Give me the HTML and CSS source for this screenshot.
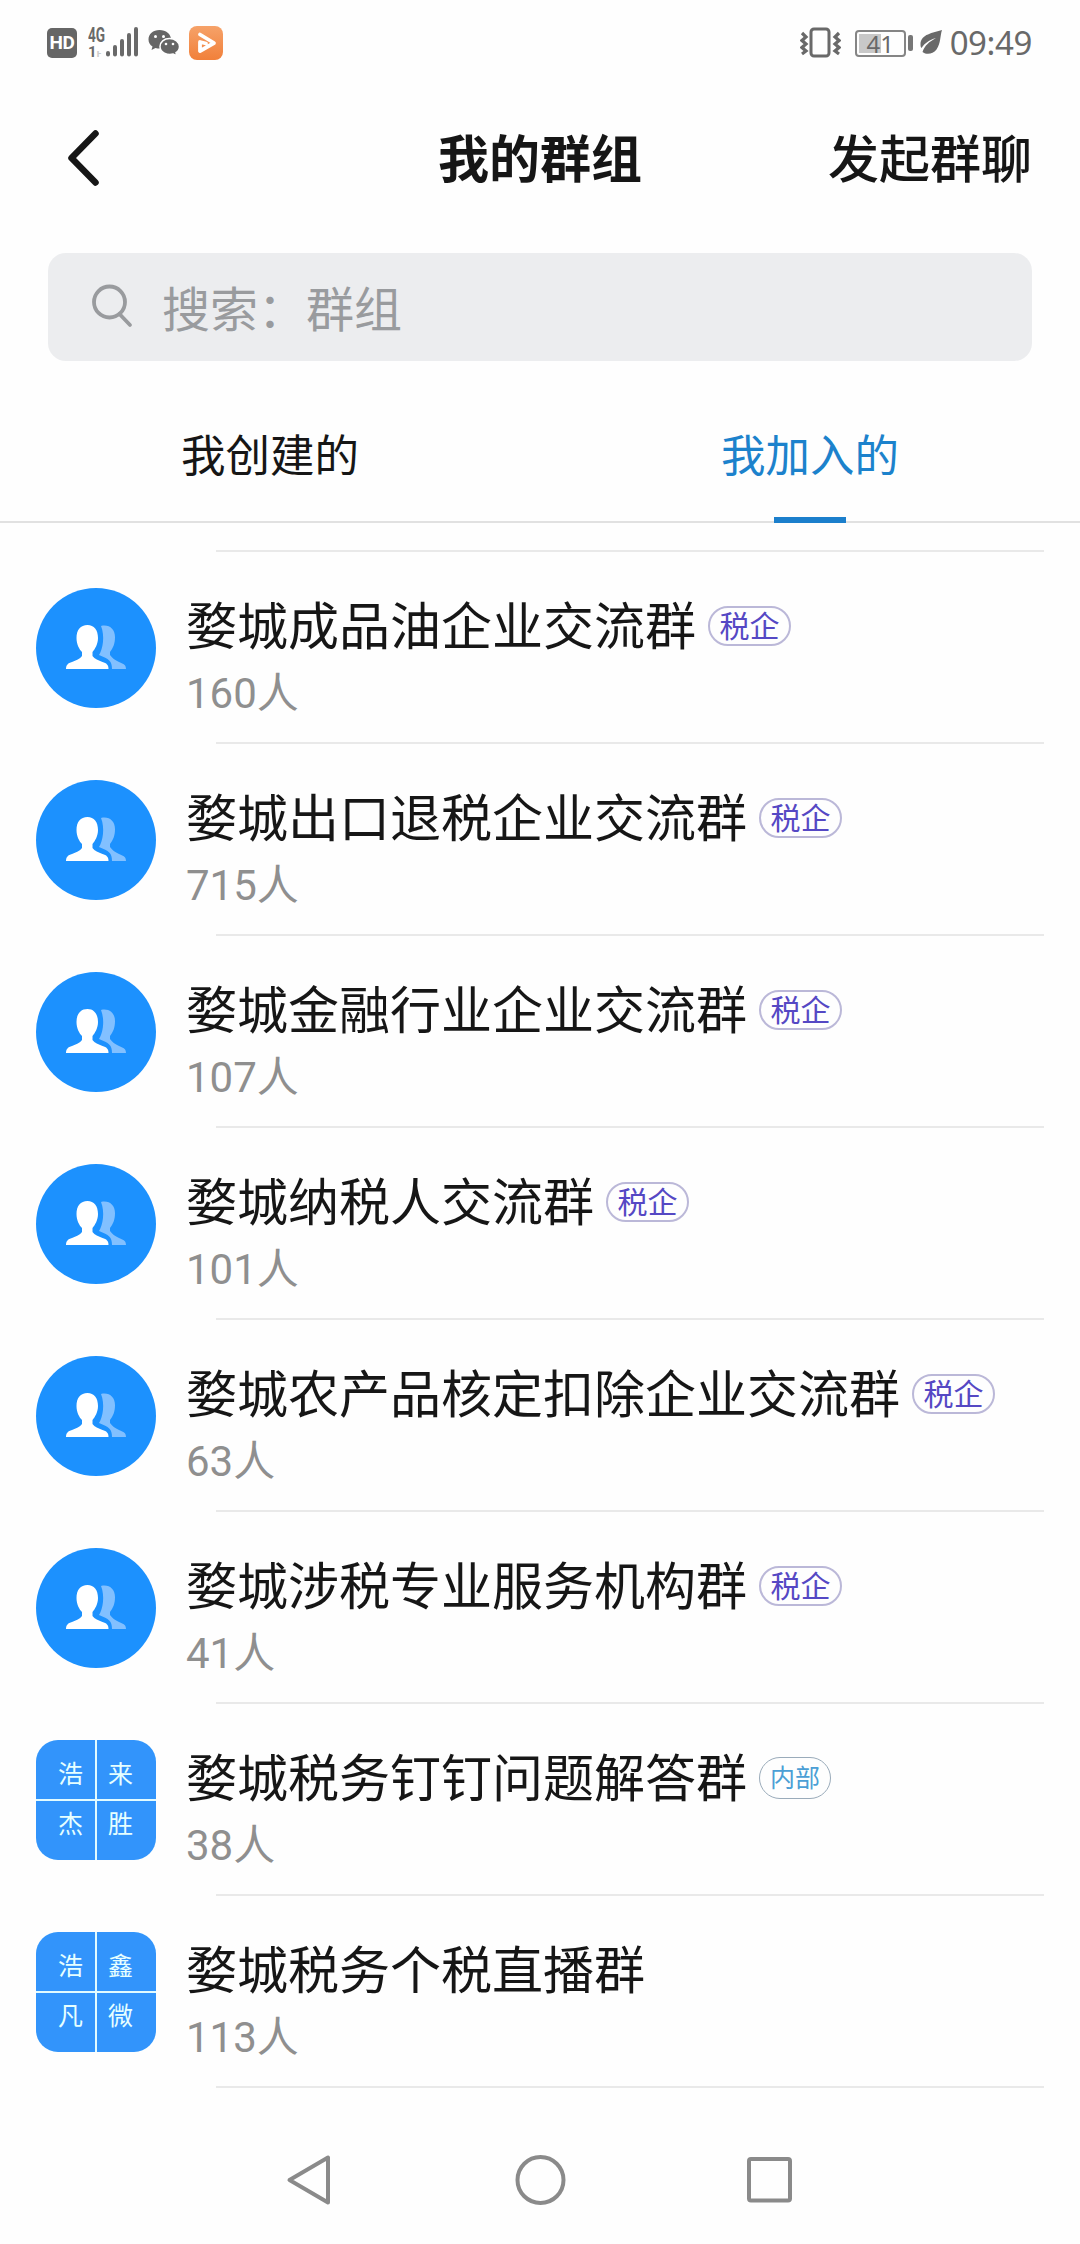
FILE: index.html
```html
<!DOCTYPE html>
<html lang="zh-CN">
<head>
<meta charset="utf-8">
<title>我的群组</title>
<link rel="stylesheet" href="styles.css">
</head>
<body>
<svg width="0" height="0" class="defs">
  <symbol id="people" viewBox="0 0 120 120">
    <path fill="#82c0ff" d="M65 38c8-2 14 3 14 11 0 7-2 11-5 15v3c2 3 5 5 9 7 5 2 7 3 7 7H76c0-8-3-10-13-14 4-6 6-19 2-29z"/>
    <path fill="#fff" d="M51.500 37c6.500 0 10.500 5 10.500 13 0 6-3 11-5.500 14v4c2 3 6 4 10 6 4 1 6 3 6 7H30c0-4 2-6 6-7 4-2 8-3 10-6v-4c-3-3-5.500-8-5.500-14 0-8 4-13 11-13z"/>
  </symbol>
</svg>
<header class="status">
  <div class="status-left">
    <span class="hd">HD</span>
    <div class="signal">
      <div class="net"><span>4G</span><span>1<i>ⱶ</i></span></div>
      <svg width="34" height="32" viewBox="0 0 34 32" stroke="#696969" stroke-width="4" stroke-linecap="round"><path d="M3 27v1.500M10 21v7.500M17 15v13.500M24 9v19.500M31 3v25.500"/></svg>
    </div>
    <svg class="wechat" width="32" height="28" viewBox="0 0 32 28">
      <path fill="#666" d="M11.500 1C5 1 .5 5 .5 10.500c0 3 1.500 5.500 4 7L3.500 21l4-2c4 1 8 .5 10.500-1 3-2 5-4 5-7.500C23 5 18 1 11.500 1z"/>
      <path fill="#666" stroke="#fff" stroke-width="1.500" d="M21.500 9.500c5.500 0 10 3.500 10 8 0 3-1.500 5-3.500 6.200l.8 3.300-3.600-2c-6 1.500-13.200-1.500-13.200-7.500 0-4.500 4-8 9.500-8z"/>
      <g fill="#fff"><circle cx="7.500" cy="7.500" r="1.500"/><circle cx="15.500" cy="7.500" r="1.500"/><circle cx="18" cy="15" r="1.300"/><circle cx="25" cy="15" r="1.300"/></g>
    </svg>
    <svg width="34" height="34" viewBox="0 0 34 34">
      <defs><linearGradient id="og" x2="0" y2="1"><stop stop-color="#f6a269"/><stop offset="1" stop-color="#f1803a"/></linearGradient></defs>
      <rect width="34" height="34" rx="8" fill="url(#og)"/>
      <path d="M11 8.500L25 17 11 25v-9l6 1.500" fill="none" stroke="#fff" stroke-width="3.800" stroke-linejoin="round" stroke-linecap="round"/>
    </svg>
  </div>
  <div class="status-right">
    <svg width="41" height="32" viewBox="0 0 41 32" fill="none" stroke="#696969">
      <rect x="11" y="2" width="18" height="27" rx="3" stroke-width="3"/>
      <path stroke-width="3.200" d="M2 6l4 4-4 3.500 4 3.500-4 3.500 4 3.500-4 3M39 6l-4 4 4 3.500-4 3.500 4 3.500-4 3.500 4 3"/>
    </svg>
    <div class="battery"><span class="cell">41</span><span class="cap"></span></div>
    <svg class="leaf" width="24" height="26" viewBox="0 0 24 26">
      <path fill="#696969" d="M23 1C14 4 2 5 1.500 15c0 2 .2 3 1 4C6 14 10 11 17 9 10 13 6 16 3.500 23c4 3 10 2.500 14-2.500C22 14 21 7 23 1z"/>
    </svg>
    <time>09:49</time>
  </div>
</header>
<nav class="titlebar">
  <svg class="back" width="34" height="60" viewBox="0 0 34 60" fill="none" stroke="#161616" stroke-width="6.500" stroke-linecap="round" stroke-linejoin="round"><path d="M28.500 5.500L4.500 30l24 24.500"/></svg>
  <h1>我的群组</h1>
  <a class="start">发起群聊</a>
</nav>
<div class="search">
  <svg width="42" height="44" viewBox="0 0 42 44" fill="none" stroke="#999b9e" stroke-width="3.800" stroke-linecap="round"><circle cx="17.500" cy="18" r="15.500"/><path d="M27.500 30l10.500 11"/></svg>
  <span>搜索：群组</span>
</div>
<div class="tabs">
  <div class="tab">我创建的</div>
  <div class="tab active">我加入的</div>
</div>
<main class="list">
  <div class="row"><svg class="avatar"><use href="#people"/></svg><div class="info"><div class="name">婺城成品油企业交流群<span class="tag">税企</span></div><div class="count">160人</div></div></div>
  <div class="row"><svg class="avatar"><use href="#people"/></svg><div class="info"><div class="name">婺城出口退税企业交流群<span class="tag">税企</span></div><div class="count">715人</div></div></div>
  <div class="row"><svg class="avatar"><use href="#people"/></svg><div class="info"><div class="name">婺城金融行业企业交流群<span class="tag">税企</span></div><div class="count">107人</div></div></div>
  <div class="row"><svg class="avatar"><use href="#people"/></svg><div class="info"><div class="name">婺城纳税人交流群<span class="tag">税企</span></div><div class="count">101人</div></div></div>
  <div class="row"><svg class="avatar"><use href="#people"/></svg><div class="info"><div class="name">婺城农产品核定扣除企业交流群<span class="tag">税企</span></div><div class="count">63人</div></div></div>
  <div class="row"><svg class="avatar"><use href="#people"/></svg><div class="info"><div class="name">婺城涉税专业服务机构群<span class="tag">税企</span></div><div class="count">41人</div></div></div>
  <div class="row"><div class="mosaic"><span>浩</span><span>来</span><span>杰</span><span>胜</span></div><div class="info"><div class="name">婺城税务钉钉问题解答群<span class="tag inner">内部</span></div><div class="count">38人</div></div></div>
  <div class="row"><div class="mosaic"><span>浩</span><span>鑫</span><span>凡</span><span>微</span></div><div class="info"><div class="name">婺城税务个税直播群</div><div class="count">113人</div></div></div>
</main>
<footer class="navbar">
  <svg width="50" height="54" viewBox="0 0 50 54"><path d="M44 4.500v45L5.500 27z"/></svg>
  <svg width="54" height="54" viewBox="0 0 54 54"><circle cx="26.500" cy="27" r="23"/></svg>
  <svg width="50" height="54" viewBox="0 0 50 54"><rect x="2" y="6" width="41" height="41.500" rx="2"/></svg>
</footer>
</body>
</html>
```

FILE: styles.css
```css
* { box-sizing: border-box; }
body {
  margin: 0;
  width: 1080px;
  height: 2244px;
  display: flex;
  flex-direction: column;
  background: #fefefe;
  color: #161616;
  font-family: Roboto, "Noto Sans CJK SC", sans-serif;
  overflow: hidden;
}
svg { display: block; flex: none; }
.defs { position: absolute; }

.status {
  height: 86px;
  padding: 0 48px 0 47px;
  display: flex;
  justify-content: space-between;
  align-items: center;
  color: #696969;
}
.status-left, .status-right { display: flex; align-items: center; }
.hd {
  width: 30px;
  height: 30px;
  border-radius: 5px;
  background: #666;
  color: #fff;
  font: bold 19px/30px Roboto, sans-serif;
  letter-spacing: -.5px;
  text-align: center;
}
.signal { display: flex; align-items: center; margin-left: 11px; width: 51px; }
.signal svg { margin-top: -2px; }
.net { width: 17px; font: bold 20px/18px Roboto, sans-serif; }
.net span { display: block; height: 17px; white-space: nowrap; }
.net span:first-child { transform: scaleX(.68); transform-origin: left; }
.net span:last-child { font-size: 15px; }
.net i { font-style: normal; color: #ccc; font-size: 11px; }
.wechat { margin: 0 9px; }
.battery { display: flex; align-items: center; gap: 2px; margin-left: 14px; }
.cell {
  width: 51px;
  height: 27px;
  border: 2px solid #858585;
  border-radius: 4px;
  padding: 2px;
  background: linear-gradient(90deg, #c8c8c8 22px, #fefefe 22px) content-box;
  font: 24px/20px "Noto Sans", sans-serif;
  text-align: center;
}
.cap { width: 5px; height: 16px; border-radius: 2px; background: #777; }
.leaf { margin: -3px 7px 0 6px; }
time { font: 33px/40px "Noto Sans", sans-serif; letter-spacing: -.4px; }

.titlebar {
  height: 146px;
  display: grid;
  grid-template-columns: 1fr auto 1fr;
  align-items: center;
  padding: 0 48px;
}
.back { margin: -2px 0 0 19px; }
h1 { margin: 4px 0 0; font-size: 51px; line-height: 60px; font-weight: 700; }
.start { justify-self: end; margin-top: 4px; font-size: 51px; line-height: 60px; font-weight: 500; }

.search {
  height: 108px;
  margin: 21px 48px 0;
  padding: 0 0 2px 44px;
  border-radius: 18px;
  background: #ecedef;
  display: flex;
  align-items: center;
  gap: 28px;
  color: #999b9e;
  font-size: 48px;
}

.tabs {
  height: 162px;
  display: grid;
  grid-template-columns: 1fr 1fr;
  border-bottom: 2px solid #e1e1e1;
}
.tab {
  display: flex;
  flex-direction: column;
  align-items: center;
  padding-top: 66px;
  font-size: 44.500px;
  line-height: 60px;
}
.active { color: #1c82cc; }
.active::after {
  content: "";
  width: 72px;
  height: 6px;
  margin-top: 30px;
  background: #1c7fcc;
  flex: none;
}

.list { padding-top: 27px; }
.list::before, .row::after {
  content: "";
  display: block;
  height: 2px;
  background: #e9e9e9;
}
.list::before { margin: 0 36px 0 216px; }
.row {
  height: 192px;
  padding: 36px 36px 0;
  display: grid;
  grid-template: 154px 2px / 120px 1fr;
  column-gap: 30px;
}
.row::after { grid-column: 1 / 3; margin-left: 180px; }
.avatar { width: 120px; height: 120px; border-radius: 50%; background: #1c91fe; }
.info { padding-top: 8px; }
.name {
  display: flex;
  align-items: center;
  gap: 12px;
  font-size: 51px;
  line-height: 64px;
  white-space: nowrap;
}
.tag {
  width: 83px;
  height: 40px;
  margin-top: -5px;
  border: 2px solid #bbb8d8;
  border-radius: 20px;
  color: #5548c4;
  font-size: 30px;
  line-height: 37px;
  text-align: center;
}
.inner {
  width: 72px;
  height: 42px;
  border: 1px solid #9aabba;
  border-radius: 21px;
  color: #4b9fd5;
  font-size: 25px;
  line-height: 41px;
}
.count { margin-top: 4px; font-size: 42px; line-height: 60px; color: #8f8f8f; }
.mosaic {
  width: 120px;
  height: 120px;
  border-radius: 22px;
  overflow: hidden;
  background: #e2fbff;
  display: grid;
  grid-template: 59px 59px / 59px 59px;
  gap: 2px;
  color: #e6ffff;
  font-size: 25px;
  line-height: 30px;
}
.mosaic span { background: #3294fb; padding: 20px 0 0 22px; }
.mosaic span:nth-child(even) { padding-left: 11px; }
.mosaic span:nth-child(n+3) { padding-top: 9px; }

.navbar {
  flex: 1;
  padding: 65px 283px 0 284px;
  display: flex;
  justify-content: space-between;
  fill: none;
  stroke: #8a8a8a;
  stroke-width: 4;
  stroke-linejoin: round;
}
```
